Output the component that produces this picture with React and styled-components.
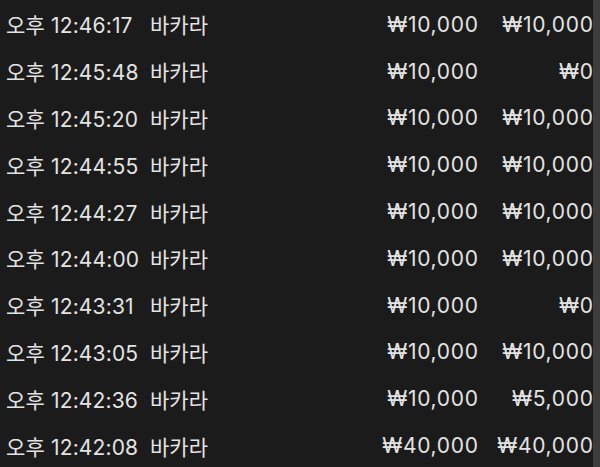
import React from "react";
import styled, { createGlobalStyle } from "styled-components";

const Global = createGlobalStyle`
  html, body { margin: 0; padding: 0; background: #1b1b1b; }
  body { font-family: "Inter", "Noto Sans CJK KR", sans-serif; }
`;

const Page = styled.div`
  display: flex;
  width: 600px;
  height: 467px;
  overflow: hidden;
  background: #1b1b1b;
`;

const List = styled.div`
  flex: 1;
  display: flex;
  flex-direction: column;
  padding-top: 1px;
`;

const Track = styled.div`
  width: 7px;
  background: #3d3d3d;
`;

const Row = styled.div`
  display: grid;
  grid-template-columns: 144px 1fr 120px 115px;
  align-items: center;
  flex: 0 0 46.8px;
  padding-left: 6px;
  color: #e3e3e3;
  font-size: 21px;
  white-space: nowrap;
`;

const Time = styled.div`
  letter-spacing: 0.15px;
`;

const Game = styled.div`
  letter-spacing: 0;
`;

const Amount = styled.div`
  text-align: right;
  letter-spacing: 0.7px;
  margin-right: -0.7px;
`;

const rows = [
  ["오후 12:46:17", "₩10,000", "₩10,000"],
  ["오후 12:45:48", "₩10,000", "₩0"],
  ["오후 12:45:20", "₩10,000", "₩10,000"],
  ["오후 12:44:55", "₩10,000", "₩10,000"],
  ["오후 12:44:27", "₩10,000", "₩10,000"],
  ["오후 12:44:00", "₩10,000", "₩10,000"],
  ["오후 12:43:31", "₩10,000", "₩0"],
  ["오후 12:43:05", "₩10,000", "₩10,000"],
  ["오후 12:42:36", "₩10,000", "₩5,000"],
  ["오후 12:42:08", "₩40,000", "₩40,000"],
];

export default function App() {
  return (
    <>
      <Global />
      <Page>
        <List>
          {rows.map(([t, a, b]) => (
            <Row key={t}>
              <Time>{t}</Time>
              <Game>바카라</Game>
              <Amount>{a}</Amount>
              <Amount>{b}</Amount>
            </Row>
          ))}
        </List>
        <Track />
      </Page>
    </>
  );
}
